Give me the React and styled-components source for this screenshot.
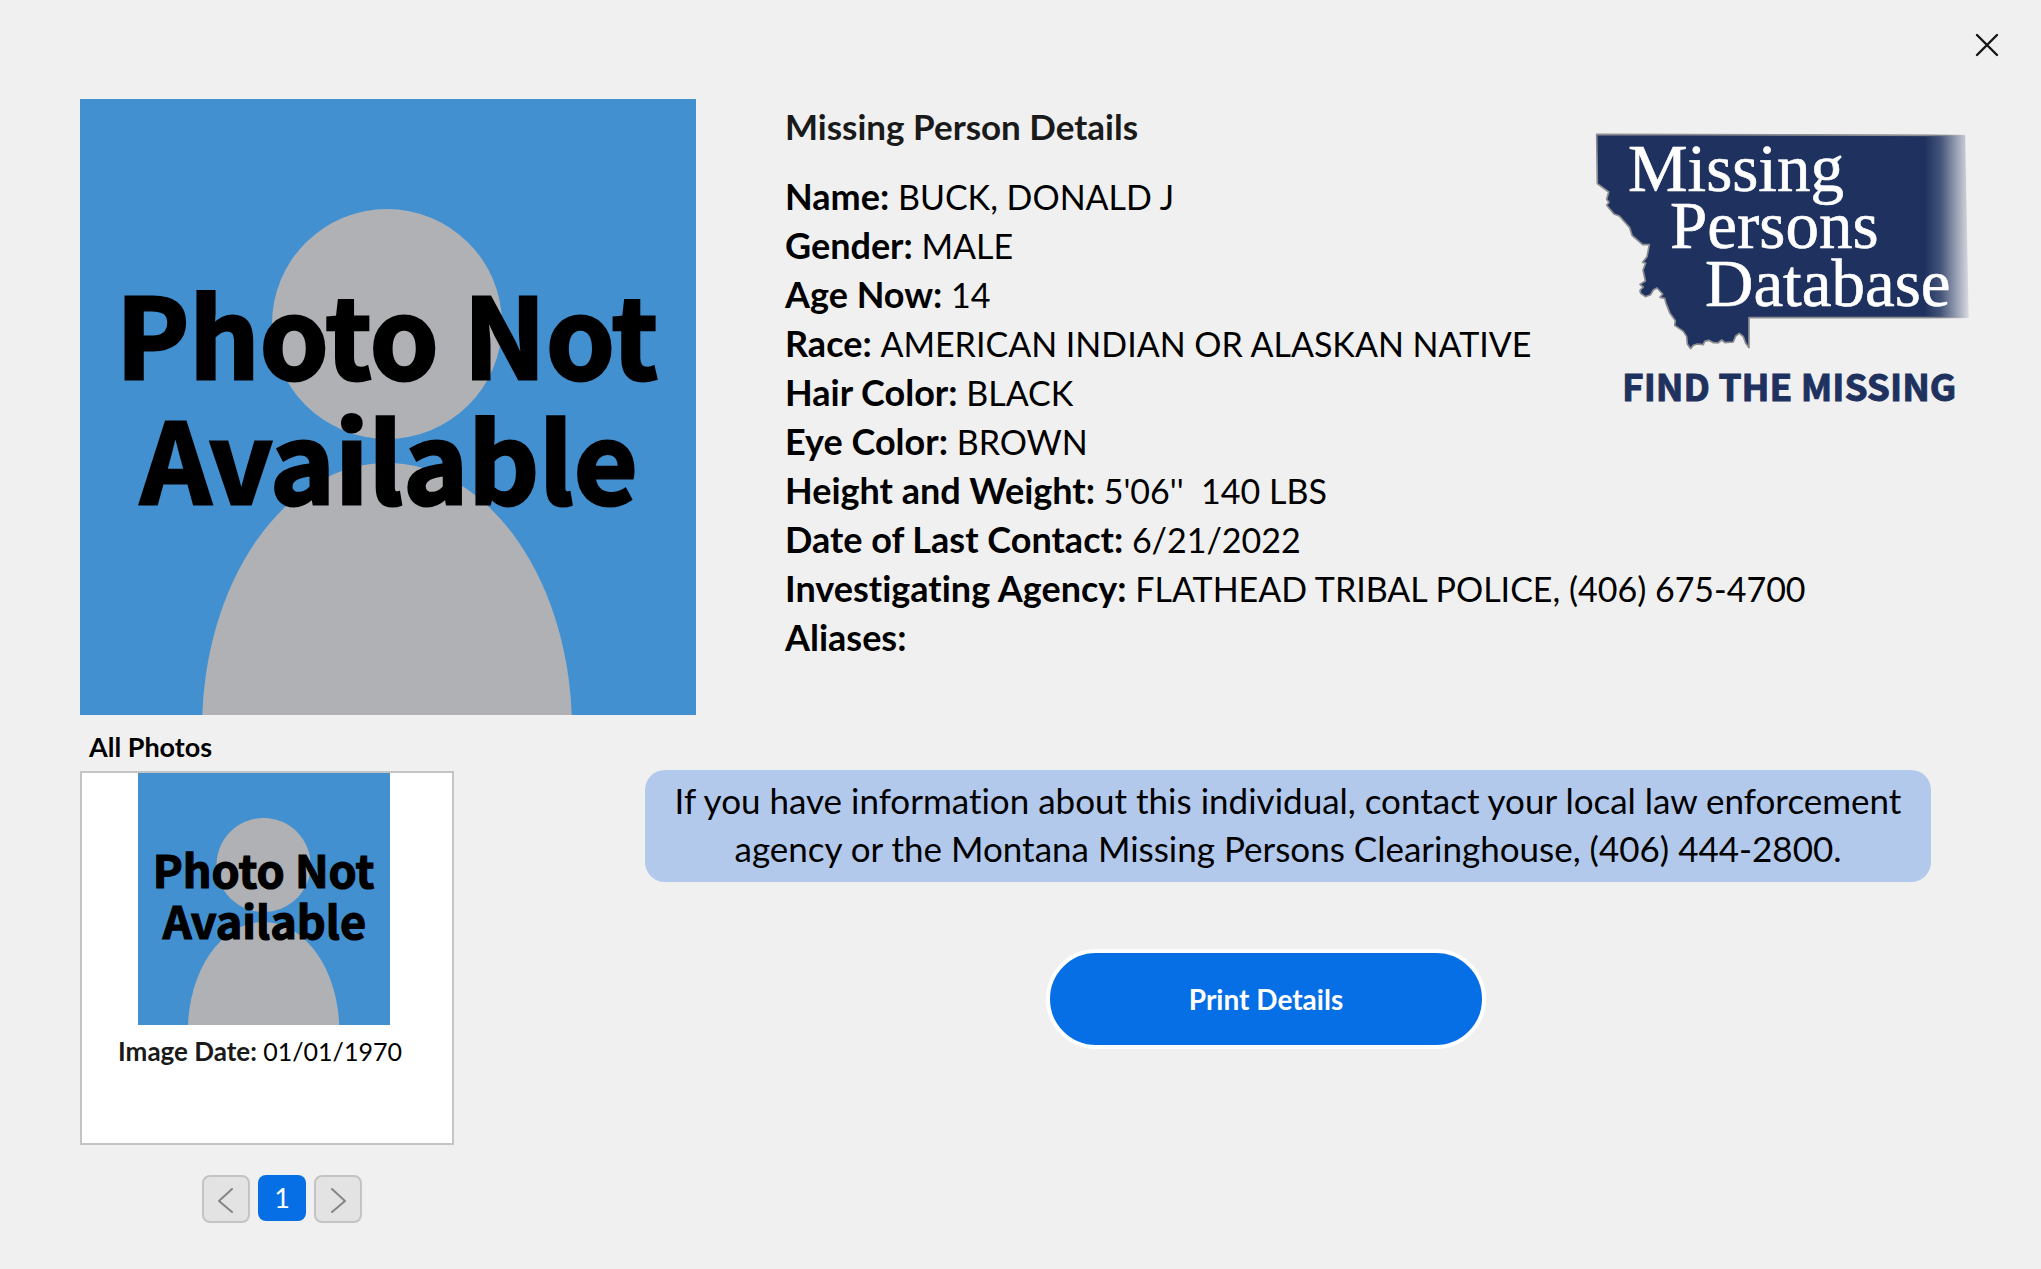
import React from "react";
import styled, { createGlobalStyle } from "styled-components";

const GlobalStyle = createGlobalStyle`
  * { box-sizing: border-box; }
  body {
    margin: 0;
    background: #f0f0f0;
    color: #000;
    font-family: Lato, "Liberation Sans", sans-serif;
    font-variant-ligatures: none;
  }
`;

const Dialog = styled.main`
  padding: 0 72px 46px 80px;
`;

const TopBar = styled.header`
  display: flex;
  justify-content: flex-end;
  height: 99px;
  padding-top: 30px;
`;

const CloseButton = styled.button`
  width: 30px;
  height: 30px;
  margin-right: -33px;
  padding: 0;
  border: 0;
  background: none;
  color: #161616;
`;

const Summary = styled.section`
  display: flex;
  gap: 89px;
`;

const Photo = styled.svg`
  display: block;
  flex: none;
  width: ${(p) => p.$size}px;
  height: ${(p) => p.$size}px;
`;

const Details = styled.div`
  flex: 1;
  min-width: 0;
`;

const Logo = styled.svg`
  float: right;
  width: 374px;
  height: 292px;
  margin-top: 31px;
  overflow: visible;
`;

const Heading = styled.h1`
  margin: 3px 0 21px;
  font-size: 35px;
  line-height: 49px;
  font-weight: 700;
  color: #1a1a1a;
`;

const Facts = styled.dl`
  margin: 0;
  font-size: 34px;
  line-height: 49px;
`;

const Fact = styled.div`
  dt, dd { display: inline; margin: 0; }
  dt { font-size: 36px; font-weight: 700; }
  dd { white-space: pre-wrap; }
`;

const Lower = styled.section`
  display: flex;
  gap: 191px;
  margin-top: 16px;
`;

const Gallery = styled.div`
  flex: none;
  width: 374px;
`;

const GalleryTitle = styled.h2`
  margin: 0 0 8px;
  padding-left: 9px;
  font-size: 27px;
  line-height: 32px;
  font-weight: 700;
`;

const PhotoCard = styled.figure`
  display: flex;
  flex-direction: column;
  align-items: center;
  height: 374px;
  margin: 0;
  padding-right: 6px;
  border: 2px solid #c4c4c4;
  background: #fff;
`;

const Caption = styled.figcaption`
  margin-top: 8px;
  padding-right: 8px;
  font-size: 25px;
  line-height: 36px;

  strong { font-size: 26px; font-weight: 700; color: #1a1a1a; }
`;

const Pager = styled.nav`
  display: flex;
  gap: 8px;
  margin-top: 30px;
  padding-left: 122px;
`;

const PageButton = styled.button`
  display: flex;
  align-items: center;
  justify-content: center;
  width: 48px;
  height: ${(p) => (p.$active ? 46 : 48)}px;
  padding: 0;
  border: ${(p) => (p.$active ? "0" : "2px solid #c4c4c4")};
  border-radius: 8px;
  background: ${(p) => (p.$active ? "#076fe5" : "#e3e3e3")};
  color: ${(p) => (p.$active ? "#fff" : "#858585")};
  font: 400 27px/32px Lato, "Liberation Sans", sans-serif;
`;

const Contact = styled.div`
  flex: 1;
  display: flex;
  flex-direction: column;
  align-items: center;
  margin: 39px 38px 0 0;
`;

const Notice = styled.p`
  width: 100%;
  margin: 0 0 67px;
  padding: 6px 16px 10px;
  border-radius: 20px;
  background: #b2c9ec;
  font-size: 35px;
  line-height: 48px;
  text-align: center;
`;

const PrintButton = styled.button`
  width: 440px;
  height: 100px;
  margin-right: 44px;
  border: 4px solid #fff;
  border-radius: 50px;
  background: #076fe5;
  color: #fff;
  font: 700 28px/36px Lato, "Liberation Sans", sans-serif;
`;

const facts = [
  ["Name:", "BUCK, DONALD J"],
  ["Gender:", "MALE"],
  ["Age Now:", "14"],
  ["Race:", "AMERICAN INDIAN OR ALASKAN NATIVE"],
  ["Hair Color:", "BLACK"],
  ["Eye Color:", "BROWN"],
  ["Height and Weight:", "5'06''  140 LBS"],
  ["Date of Last Contact:", "6/21/2022"],
  ["Investigating Agency:", "FLATHEAD TRIBAL POLICE, (406) 675-4700"],
  ["Aliases:", ""],
];

function MissingPhoto({ size }) {
  return (
    <Photo $size={size} viewBox="0 0 616 616" role="img" aria-label="Photo Not Available">
      <rect width="616" height="616" fill="#4390d1" />
      <circle cx="307" cy="225" r="115" fill="#afb1b5" />
      <ellipse cx="307" cy="630" rx="185" ry="266" fill="#afb1b5" />
      <g stroke="#000" strokeWidth="3" fontFamily='"Noto Sans CJK SC", "Noto Sans", sans-serif' fontWeight="700" fontSize="110" textAnchor="middle">
        <text x="307" y="280">Photo Not</text>
        <text x="309" y="405">Available</text>
      </g>
    </Photo>
  );
}

function DatabaseLogo() {
  return (
    <Logo viewBox="0 0 374 292" role="img" aria-label="Missing Persons Database, Find the Missing">
      <defs>
        <linearGradient id="state-fade" gradientUnits="userSpaceOnUse" x1="1095" y1="0" x2="1230" y2="0">
          <stop offset="0" stopColor="#1f325f" />
          <stop offset="0.35" stopColor="#1f325f" stopOpacity="0.82" />
          <stop offset="1" stopColor="#1f325f" stopOpacity="0.08" />
        </linearGradient>
        <linearGradient id="edge-fade" gradientUnits="userSpaceOnUse" x1="1095" y1="0" x2="1226" y2="0">
          <stop offset="0" stopColor="#8b8d90" />
          <stop offset="1" stopColor="#8b8d90" stopOpacity="0" />
        </linearGradient>
      </defs>
      <g transform="translate(-35 -20) scale(0.333333)">
        <path
          d="M110 73 L1215 76 L1226 623 L567 623 L567 713 L557 700 L550 680 L538 670 L527 678 L520 696 L495 698 L485 690 L474 699 L460 698 L446 691 L434 694 L430 704 L412 702 L400 706 L392 716 L382 702 L380 680 L370 664 L344 646 L346 632 L330 610 L318 580 L314 565 L300 562 L308 552 L291 534 L280 540 L272 554 L256 560 L242 550 L240 541 L250 531 L240 523 L256 513 L249 480 L257 459 L248 457 L261 440 L268 404 L248 404 L216 376 L209 353 L178 318 L162 312 L140 286 L147 277 L140 268 L146 246 L112 221 Z"
          fill="url(#state-fade)"
          stroke="url(#edge-fade)"
          strokeWidth="5"
          strokeLinejoin="round"
        />
      </g>
      <g fill="#fff" stroke="#fff" strokeWidth="0.6" fontFamily='"Liberation Serif", serif' fontSize="67">
        <text x="33" y="61">Missing</text>
        <text x="75" y="118">Persons</text>
        <text x="110" y="176">Database</text>
      </g>
      <text x="27" y="271" fill="#1f325f" stroke="#1f325f" strokeWidth="1" fontFamily='"Noto Sans CJK SC", "Liberation Sans", sans-serif' fontWeight="700" fontSize="37">
        FIND THE MISSING
      </text>
    </Logo>
  );
}

function Chevron({ d }) {
  return (
    <svg width="24" height="28" viewBox="0 0 24 28" fill="none" stroke="currentColor" strokeWidth="2" strokeLinecap="round" strokeLinejoin="round" aria-hidden="true">
      <path d={d} />
    </svg>
  );
}

export default function App() {
  return (
    <>
      <GlobalStyle />
      <Dialog>
        <TopBar>
          <CloseButton type="button" aria-label="Close">
            <svg width="30" height="30" viewBox="0 0 30 30" fill="none" stroke="currentColor" strokeWidth="2.4" strokeLinecap="round" aria-hidden="true">
              <path d="M5 5 L25 25 M25 5 L5 25" />
            </svg>
          </CloseButton>
        </TopBar>
        <Summary>
          <MissingPhoto size={616} />
          <Details>
            <DatabaseLogo />
            <Heading>Missing Person Details</Heading>
            <Facts>
              {facts.map(([label, value]) => (
                <Fact key={label}>
                  <dt>{label}</dt> <dd>{value}</dd>
                </Fact>
              ))}
            </Facts>
          </Details>
        </Summary>
        <Lower>
          <Gallery>
            <GalleryTitle>All Photos</GalleryTitle>
            <PhotoCard>
              <MissingPhoto size={252} />
              <Caption>
                <strong>Image Date:</strong> 01/01/1970
              </Caption>
            </PhotoCard>
            <Pager aria-label="Photo pages">
              <PageButton type="button" aria-label="Previous page">
                <Chevron d="M18 4 L5 16 L18 27" />
              </PageButton>
              <PageButton type="button" $active aria-current="page">1</PageButton>
              <PageButton type="button" aria-label="Next page">
                <Chevron d="M6 4 L19 16 L6 27" />
              </PageButton>
            </Pager>
          </Gallery>
          <Contact>
            <Notice>
              If you have information about this individual, contact your local law enforcement agency or the Montana
              Missing Persons Clearinghouse, (406) 444-2800.
            </Notice>
            <PrintButton type="button">Print Details</PrintButton>
          </Contact>
        </Lower>
      </Dialog>
    </>
  );
}
